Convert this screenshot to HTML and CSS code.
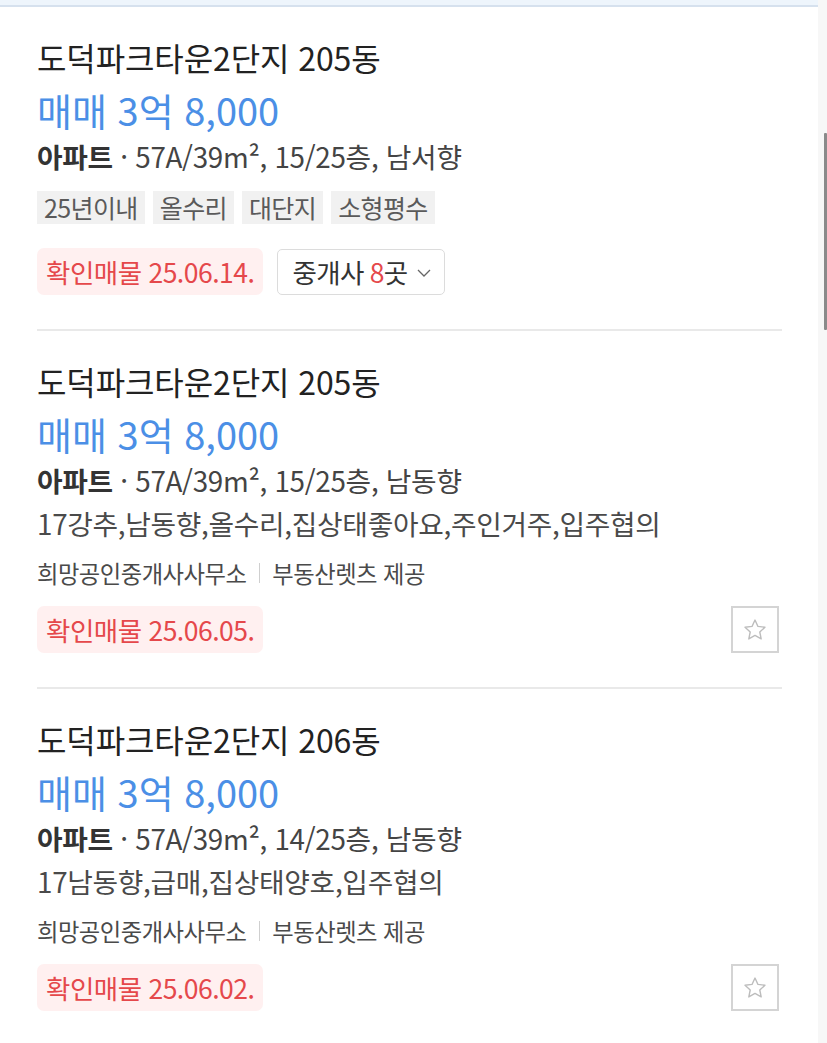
FILE: index.html
```html
<!DOCTYPE html>
<html lang="ko">
<head>
<meta charset="utf-8">
<link rel="stylesheet" href="styles.css">
</head>
<body>
<div class="page">
  <div class="panel">
    <div class="topband"></div>
    <ul class="list">
      <li class="item">
        <div class="title">도덕파크타운2단지 205동</div>
        <div class="price">매매 3억 8,000</div>
        <div class="info"><b>아파트</b> · 57A/39m², 15/25층, 남서향</div>
        <div class="tags">
          <span class="tag">25년이내</span>
          <span class="tag">올수리</span>
          <span class="tag">대단지</span>
          <span class="tag">소형평수</span>
        </div>
        <div class="bottom tagged">
          <span class="badge">확인매물 25.06.14.</span>
          <button class="agents">중개사 <em>8</em>곳<svg class="chev" viewBox="0 0 14 8" width="14" height="8"><path d="M1 1l6 6 6-6" fill="none" stroke="#666" stroke-width="1.3"/></svg></button>
        </div>
      </li>
      <li class="item">
        <div class="title">도덕파크타운2단지 205동</div>
        <div class="price">매매 3억 8,000</div>
        <div class="info"><b>아파트</b> · 57A/39m², 15/25층, 남동향</div>
        <div class="desc">17강추,남동향,올수리,집상태좋아요,주인거주,입주협의</div>
        <div class="agent">희망공인중개사사무소<span class="bar"></span>부동산렛츠 제공</div>
        <div class="bottom">
          <span class="badge">확인매물 25.06.05.</span>
          <button class="star"><svg viewBox="0 0 24 24" width="26" height="26"><path d="M12 2.8l2.75 5.9 6.45.75-4.78 4.4 1.28 6.37L12 17.05l-5.7 3.17 1.28-6.37L2.8 9.45l6.45-.75z" fill="none" stroke="#bdbdbd" stroke-width="1.3" stroke-linejoin="round"/></svg></button>
        </div>
      </li>
      <li class="item">
        <div class="title">도덕파크타운2단지 206동</div>
        <div class="price">매매 3억 8,000</div>
        <div class="info"><b>아파트</b> · 57A/39m², 14/25층, 남동향</div>
        <div class="desc">17남동향,급매,집상태양호,입주협의</div>
        <div class="agent">희망공인중개사사무소<span class="bar"></span>부동산렛츠 제공</div>
        <div class="bottom">
          <span class="badge">확인매물 25.06.02.</span>
          <button class="star"><svg viewBox="0 0 24 24" width="26" height="26"><path d="M12 2.8l2.75 5.9 6.45.75-4.78 4.4 1.28 6.37L12 17.05l-5.7 3.17 1.28-6.37L2.8 9.45l6.45-.75z" fill="none" stroke="#bdbdbd" stroke-width="1.3" stroke-linejoin="round"/></svg></button>
        </div>
      </li>
    </ul>
  </div>
  <div class="rail"><div class="thumb"></div></div>
</div>
</body>
</html>
```

FILE: styles.css
```css
* { box-sizing: border-box; }
html, body { margin: 0; padding: 0; background: #fff; }
body {
  font-family: "Noto Sans CJK KR", "Noto Sans", sans-serif;
  color: #222;
  width: 827px;
  height: 1043px;
  overflow: hidden;
}
.page { display: flex; height: 1043px; }
.panel { width: 818px; flex: none; }
.rail { flex: 1; background: #f7f7f7; position: relative; }
.thumb {
  position: absolute;
  left: 6px;
  top: 133px;
  width: 3px;
  height: 197px;
  background: #8a8a8a;
  border-radius: 1px;
}
.topband {
  height: 7px;
  background: #eef5fc;
  border-bottom: 2px solid #d6e1ee;
}
.list { list-style: none; margin: 0; padding: 0 36px 0 37px; }
.item {
  padding: 28px 0 34px;
  border-bottom: 2px solid #e9e9e9;
}
.title {
  font-size: 32px;
  line-height: 44px;
  letter-spacing: -0.1px;
  color: #222;
}
.price {
  margin-top: 6px;
  font-size: 38px;
  line-height: 50px;
  color: #4b8fe6;
  letter-spacing: 0;
}
.info {
  font-size: 27.8px;
  line-height: 42px;
  color: #444;
  letter-spacing: -0.3px;
}
.info b { color: #333; font-weight: bold; }
.desc {
  font-size: 27.8px;
  line-height: 44px;
  color: #4a4a4a;
  letter-spacing: -0.3px;
}
.agent {
  margin-top: 8px;
  font-size: 23.3px;
  line-height: 40px;
  color: #4a4a4a;
  letter-spacing: -0.5px;
  display: flex;
  align-items: center;
}
.bar {
  display: inline-block;
  width: 1px;
  height: 20px;
  background: #cfcfcf;
  margin: 0 12px 0 13px;
}
.tags { display: flex; gap: 8px; margin-top: 14px; }
.tag {
  display: inline-block;
  height: 33px;
  line-height: 33px;
  padding: 0 7px;
  background: #f1f1f1;
  color: #5a5a5a;
  font-size: 25px;
  letter-spacing: -0.6px;
}
.bottom {
  display: flex;
  align-items: center;
  gap: 14px;
  margin-top: 13px;
}
.bottom.tagged { margin-top: 24px; }
.badge {
  display: inline-block;
  height: 47px;
  line-height: 47px;
  padding: 0 9px;
  border-radius: 7px;
  background: #fff0f0;
  color: #e5484b;
  font-size: 26.5px;
  letter-spacing: -0.5px;
}
.agents {
  height: 46px;
  padding: 0 13px 0 14px;
  border: 1.5px solid #dcdcdc;
  border-radius: 5px;
  background: #fff;
  font-family: inherit;
  font-size: 26.5px;
  color: #333;
  letter-spacing: -0.6px;
  display: flex;
  align-items: center;
}
.agents em { font-style: normal; color: #e5484b; margin-left: 6px; }
.chev { margin-left: 9px; margin-top: 3px; }
.star {
  margin-left: auto;
  margin-right: 3px;
  width: 48px;
  height: 47px;
  border: 2px solid #d4d4d4;
  background: #fff;
  padding: 0;
  display: flex;
  align-items: center;
  justify-content: center;
}
```
